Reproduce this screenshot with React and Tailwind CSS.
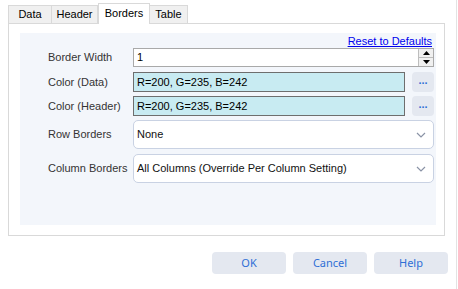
import React from 'react';

const tabs = ['Data', 'Header', 'Borders', 'Table'];

function Chevron() {
  return (
    <svg width="10" height="6" viewBox="0 0 10 6" className="shrink-0">
      <path d="M1 1 L5 5 L9 1" fill="none" stroke="#8a93a6" strokeWidth="1.2" />
    </svg>
  );
}

function Spinner() {
  return (
    <div className="w-[15px] h-full border-l border-[#bdbdbd] bg-[#f0f0f0] flex flex-col">
      <div className="flex-1 flex items-center justify-center border-b border-[#bdbdbd]">
        <svg width="7" height="4" viewBox="0 0 7 4"><path d="M0 4 L3.5 0 L7 4 Z" fill="#000" /></svg>
      </div>
      <div className="flex-1 flex items-center justify-center">
        <svg width="7" height="4" viewBox="0 0 7 4"><path d="M0 0 L3.5 4 L7 0 Z" fill="#000" /></svg>
      </div>
    </div>
  );
}

function Row({ label, children, className }) {
  return (
    <div className={'flex items-center ' + className}>
      <div className="w-[113px] pl-[28px] text-[11px] text-[#333]">{label}</div>
      <div className="flex-1 h-full flex">{children}</div>
    </div>
  );
}

function ColorRow({ label, value, className }) {
  return (
    <Row label={label} className={className}>
      <div className="w-[272px] h-full border border-[#6e6e6e] bg-[#c8ebf2] flex items-center px-[3px] text-[11px] text-black">{value}</div>
      <div className="ml-[7px] w-[22px] h-full rounded-[4px] bg-[#e4e8f0] flex items-center justify-center text-[#2f6fd6] text-[11px] font-bold leading-none pb-[4px]">...</div>
    </Row>
  );
}

function Dropdown({ label, value, className }) {
  return (
    <Row label={label} className={className}>
      <div className="w-[301px] h-full rounded-[5px] border border-[#c9d2e3] bg-white flex items-center justify-between pl-[3px] pr-[7px] text-[11px] text-[#111]">
        <span>{value}</span>
        <Chevron />
      </div>
    </Row>
  );
}

export default function App() {
  return (
    <div className="w-[458px] h-[289px] bg-white relative overflow-hidden" style={{ fontFamily: '"Liberation Sans", Arial, sans-serif' }}>
      <div className="pl-[8px] pt-[3px]">
        {/* tabs */}
        <div className="flex items-end h-[20px]">
          {tabs.map((t) =>
            t === 'Borders' ? (
              <div key={t} className="h-[21px] -mb-px w-[52px] border border-b-0 border-[#d9d9d9] bg-white flex items-center justify-center text-[11px] text-black relative z-10 pb-[2px]">{t}</div>
            ) : (
              <div key={t} className={'h-[18px] border border-b-0 border-[#d9d9d9] bg-[#f0f0f0] flex items-center justify-center text-[11px] text-black ' + (t === 'Data' ? 'w-[44px]' : t === 'Header' ? 'w-[46px] border-l-0' : 'w-[38px] border-l-0')}>{t}</div>
            )
          )}
        </div>
        {/* panel */}
        <div className="w-[437px] h-[213px] border border-[#d9d9d9] bg-white pt-[9px] pl-[11px] pr-[8px] pb-[10px]">
          <div className="h-full bg-[#f3f6fb] flex flex-col pt-[2px]">
            <div className="h-[13px] flex justify-end pr-[4px]">
              <span className="text-[11px] leading-[13px] text-[#0000ee] underline">Reset to Defaults</span>
            </div>
            <Row label="Border Width" className="h-[19px]">
              <div className="w-[301px] h-full border border-[#a9a9a9] bg-white flex items-center justify-between">
                <span className="pl-[3px] text-[11px] text-black">1</span>
                <Spinner />
              </div>
            </Row>
            <ColorRow label="Color (Data)" value="R=200, G=235, B=242" className="mt-[5px] h-[20px]" />
            <ColorRow label="Color (Header)" value="R=200, G=235, B=242" className="mt-[4px] h-[20px]" />
            <Dropdown label="Row Borders" value="None" className="mt-[4px] h-[29px]" />
            <Dropdown label="Column Borders" value="All Columns (Override Per Column Setting)" className="mt-[5px] h-[29px]" />
          </div>
        </div>
        {/* buttons */}
        <div className="flex justify-end gap-[7px] pr-[10px] mt-[16px]">
          {['OK', 'Cancel', 'Help'].map((b) => (
            <div key={b} className="w-[74px] h-[22px] rounded-[4px] bg-[#e4e8f0] flex items-center justify-center text-[11px] text-[#2f6fd6]" style={{ fontFamily: '"Noto Sans", sans-serif' }}>{b}</div>
          ))}
        </div>
      </div>
      <div className="absolute right-[1px] top-0 h-full w-px bg-[#e3e3e3]" />
    </div>
  );
}
